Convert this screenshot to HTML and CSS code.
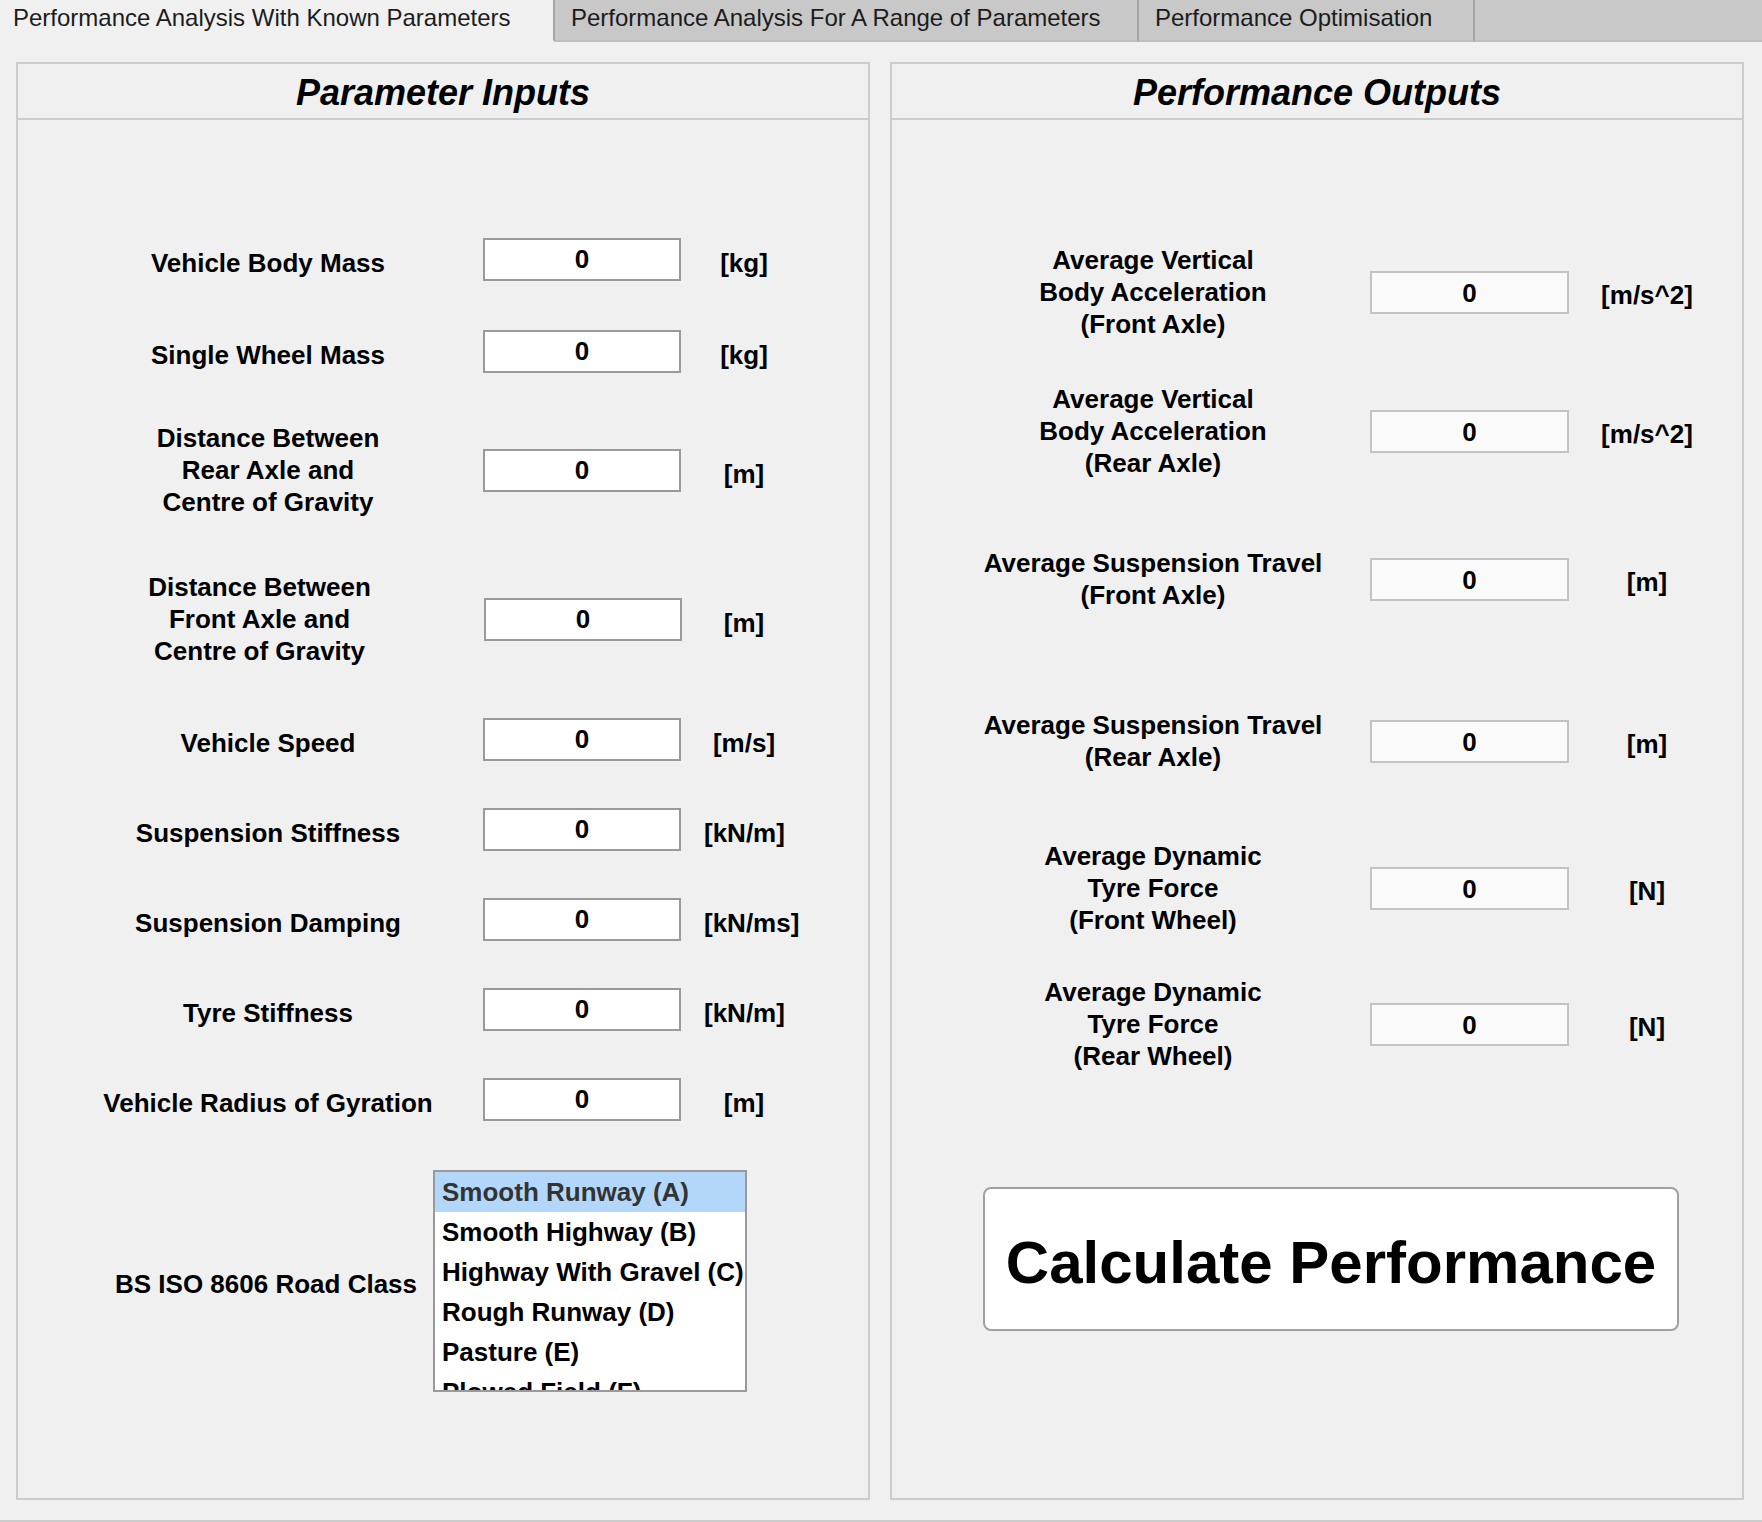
FILE: index.html
```html
<!DOCTYPE html>
<html lang="en">
<head>
<meta charset="utf-8">
<title>Performance Analysis</title>
<link rel="stylesheet" href="styles.css">
</head>
<body>
<div class="tabbar">
  <div class="tab tab-active">Performance Analysis With Known Parameters</div>
  <div class="tab tab-2">Performance Analysis For A Range of Parameters</div>
  <div class="tab tab-3">Performance Optimisation</div>
  <div class="tab-fill"></div>
</div>

<div class="main">
  <section class="panel">
    <div class="panel-head">Parameter Inputs</div>
    <div class="panel-body">
      <div class="row r-first">
        <div class="label one">Vehicle Body Mass</div>
        <div class="field">0</div>
        <div class="unit">[kg]</div>
      </div>
      <div class="row r-g49">
        <div class="label one">Single Wheel Mass</div>
        <div class="field">0</div>
        <div class="unit">[kg]</div>
      </div>
      <div class="row r-g49">
        <div class="label">Distance Between<br>Rear Axle and<br>Centre of Gravity</div>
        <div class="field">0</div>
        <div class="unit">[m]</div>
      </div>
      <div class="row r-g53">
        <div class="label label-left">Distance Between<br>Front Axle and<br>Centre of Gravity</div>
        <div class="field field-shift">0</div>
        <div class="unit">[m]</div>
      </div>
      <div class="row r-g51">
        <div class="label one">Vehicle Speed</div>
        <div class="field">0</div>
        <div class="unit">[m/s]</div>
      </div>
      <div class="row">
        <div class="label one">Suspension Stiffness</div>
        <div class="field">0</div>
        <div class="unit">[kN/m]</div>
      </div>
      <div class="row">
        <div class="label one">Suspension Damping</div>
        <div class="field">0</div>
        <div class="unit">[kN/ms]</div>
      </div>
      <div class="row">
        <div class="label one">Tyre Stiffness</div>
        <div class="field">0</div>
        <div class="unit">[kN/m]</div>
      </div>
      <div class="row">
        <div class="label one">Vehicle Radius of Gyration</div>
        <div class="field">0</div>
        <div class="unit">[m]</div>
      </div>
      <div class="row-list">
        <div class="list-label">BS ISO 8606 Road Class</div>
        <div class="listbox">
          <div class="opt opt-sel">Smooth Runway (A)</div>
          <div class="opt">Smooth Highway (B)</div>
          <div class="opt">Highway With Gravel (C)</div>
          <div class="opt">Rough Runway (D)</div>
          <div class="opt">Pasture (E)</div>
          <div class="opt">Plowed Field (F)</div>
        </div>
      </div>
    </div>
  </section>

  <section class="panel">
    <div class="panel-head">Performance Outputs</div>
    <div class="panel-body">
      <div class="orow o-first">
        <div class="olabel">Average Vertical<br>Body Acceleration<br>(Front Axle)</div>
        <div class="ofield">0</div>
        <div class="ounit">[m/s^2]</div>
      </div>
      <div class="orow o-g43">
        <div class="olabel">Average Vertical<br>Body Acceleration<br>(Rear Axle)</div>
        <div class="ofield">0</div>
        <div class="ounit">[m/s^2]</div>
      </div>
      <div class="orow o-g68">
        <div class="olabel">Average Suspension Travel<br>(Front Axle)</div>
        <div class="ofield">0</div>
        <div class="ounit">[m]</div>
      </div>
      <div class="orow o-g98">
        <div class="olabel">Average Suspension Travel<br>(Rear Axle)</div>
        <div class="ofield">0</div>
        <div class="ounit">[m]</div>
      </div>
      <div class="orow o-g67">
        <div class="olabel">Average Dynamic<br>Tyre Force<br>(Front Wheel)</div>
        <div class="ofield">0</div>
        <div class="ounit">[N]</div>
      </div>
      <div class="orow o-g40">
        <div class="olabel">Average Dynamic<br>Tyre Force<br>(Rear Wheel)</div>
        <div class="ofield">0</div>
        <div class="ounit">[N]</div>
      </div>
      <button class="calc" type="button">Calculate Performance</button>
    </div>
  </section>
</div>
<div class="foot-line"></div>
</body>
</html>
```

FILE: styles.css
```css
html, body {
  margin: 0;
  padding: 0;
}
body {
  width: 1762px;
  background: #f0f0f0;
  font-family: "Liberation Sans", Arial, Helvetica, sans-serif;
  color: #000;
}

/* tabs */
.tabbar {
  display: flex;
  height: 42px;
}
.tab {
  box-sizing: border-box;
  height: 42px;
  font-size: 24px;
  line-height: 36px;
  padding-left: 16px;
  white-space: nowrap;
  color: #1c1c1c;
  background: #c8c8c8;
  border-right: 2px solid #a6a6a6;
  border-bottom: 2px solid #bdbdbd;
}
.tab-active {
  width: 555px;
  padding-left: 13px;
  background: #f0f0f0;
  border-bottom-color: #f0f0f0;
}
.tab-2 {
  width: 584px;
}
.tab-3 {
  width: 336px;
}
.tab-fill {
  flex: 1;
  height: 42px;
  box-sizing: border-box;
  background: #c8c8c8;
  border-bottom: 2px solid #bdbdbd;
}

/* panels */
.main {
  display: flex;
  gap: 20px;
  padding: 20px 0 0 16px;
}
.panel {
  box-sizing: border-box;
  width: 854px;
  height: 1438px;
  border: 2px solid #cccccc;
}
.panel-head {
  box-sizing: border-box;
  height: 56px;
  padding-top: 4px;
  border-bottom: 2px solid #cccccc;
  text-align: center;
  font-size: 36px;
  font-weight: bold;
  font-style: italic;
  line-height: 50px;
}
.panel-body {
  display: flex;
  flex-direction: column;
  align-items: flex-start;
}

/* input rows */
.row {
  display: flex;
  align-items: center;
  margin-left: 72px;
  margin-top: 47px;
  font-size: 26px;
  font-weight: bold;
}
.r-first { margin-top: 118px; }
.r-g49 { margin-top: 49px; }
.r-g53 { margin-top: 53px; }
.r-g51 { margin-top: 51px; }

.label {
  width: 356px;
  text-align: center;
  line-height: 32px;
}
.label.one {
  padding-top: 7px;
}
.label-left {
  box-sizing: border-box;
  padding-right: 17px;
}
.field {
  box-sizing: border-box;
  width: 198px;
  height: 43px;
  margin-left: 37px;
  border: 2px solid #9a9a9a;
  background: #ffffff;
  text-align: center;
  line-height: 39px;
}
.field-shift {
  margin-left: 38px;
  margin-right: -1px;
}
.unit {
  width: 80px;
  margin-left: 23px;
  text-align: center;
  line-height: 32px;
  padding-top: 7px;
}

/* list row */
.row-list {
  display: flex;
  align-items: center;
  margin-top: 49px;
  margin-left: 83px;
  font-size: 26px;
  font-weight: bold;
}
.list-label {
  width: 330px;
  text-align: center;
  white-space: nowrap;
  line-height: 32px;
  padding-top: 6px;
}
.listbox {
  box-sizing: border-box;
  width: 314px;
  height: 222px;
  margin-left: 2px;
  border: 2px solid #9a9a9a;
  background: #ffffff;
  overflow: hidden;
}
.opt {
  height: 40px;
  line-height: 41px;
  padding-left: 7px;
  white-space: nowrap;
}
.opt-sel {
  background: #b3d7fa;
  color: #333333;
}

/* output rows */
.orow {
  display: flex;
  align-items: center;
  margin-left: 91px;
  font-size: 26px;
  font-weight: bold;
}
.o-first { margin-top: 124px; }
.o-g43 { margin-top: 43px; }
.o-g68 { margin-top: 68px; }
.o-g98 { margin-top: 98px; }
.o-g67 { margin-top: 67px; }
.o-g40 { margin-top: 40px; }

.olabel {
  width: 340px;
  text-align: center;
  line-height: 32px;
}
.ofield {
  box-sizing: border-box;
  width: 199px;
  height: 43px;
  margin-left: 47px;
  border: 2px solid #c3c3c3;
  background: #fafafa;
  text-align: center;
  line-height: 40px;
}
.ounit {
  width: 100px;
  margin-left: 28px;
  text-align: center;
  line-height: 32px;
  padding-top: 5px;
}

.calc {
  box-sizing: border-box;
  width: 696px;
  height: 144px;
  margin-top: 115px;
  margin-left: 91px;
  padding: 8px 0 0 0;
  border: 2px solid #a0a0a0;
  border-radius: 8px;
  background: #ffffff;
  color: #000;
  font-family: "Liberation Sans", Arial, Helvetica, sans-serif;
  font-size: 60px;
  font-weight: bold;
  line-height: 1;
  display: flex;
  align-items: center;
  justify-content: center;
}

.foot-line {
  margin-top: 20px;
  height: 2px;
  background: #cccccc;
}
```
